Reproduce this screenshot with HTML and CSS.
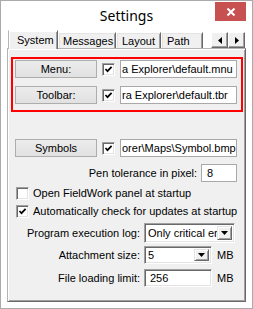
FILE: index.html
```html
<!DOCTYPE html>
<html lang="en">
<head>
    <meta charset="UTF-8">
    <title>Settings</title>
    <link rel="stylesheet" href="styles.css">
</head>
<body>
    <div class="window">
        <div class="titlebar">
            <span></span>
            <span class="title">Settings</span>
            <span class="close">
                <svg width="10" height="10" viewBox="0 0 10 10"><path d="M1.5 1.5 L8.5 8.5 M8.5 1.5 L1.5 8.5" stroke="#fff" stroke-width="2"/></svg>
            </span>
        </div>

        <div class="tabstrip">
            <div class="tab active">System</div>
            <div class="tab">Messages</div>
            <div class="tab">Layout</div>
            <div class="tab">Path</div>
            <div class="tab-scroll">
                <span class="scroll-btn"><svg width="4" height="7" viewBox="0 0 4 7"><path d="M4 0 L0 3.5 L4 7 Z" fill="#000"/></svg></span>
                <span class="scroll-btn"><svg width="4" height="7" viewBox="0 0 4 7"><path d="M0 0 L4 3.5 L0 7 Z" fill="#000"/></svg></span>
            </div>
        </div>

        <div class="panel">
            <div class="highlight">
                <div class="file-row">
                    <span class="btn">Menu:</span>
                    <span class="check checked"></span>
                    <span class="field path">a Explorer\default.mnu</span>
                </div>
                <div class="file-row">
                    <span class="btn">Toolbar:</span>
                    <span class="check checked"></span>
                    <span class="field path">ra Explorer\default.tbr</span>
                </div>
            </div>

            <div class="file-row symbols">
                <span class="btn">Symbols</span>
                <span class="check checked"></span>
                <span class="field path">orer\Maps\Symbol.bmp</span>
            </div>

            <div class="pen-row">
                <span>Pen tolerance in pixel:</span>
                <span class="field small">8</span>
            </div>

            <div class="check-row first">
                <span class="check"></span>
                <span>Open FieldWork panel at startup</span>
            </div>
            <div class="check-row">
                <span class="check checked"></span>
                <span>Automatically check for updates at startup</span>
            </div>

            <div class="field-row log">
                <span class="label">Program execution log:</span>
                <span class="combo wide"><span class="combo-text">Only critical err</span><span class="drop"></span></span>
            </div>
            <div class="field-row attach">
                <span class="label">Attachment size:</span>
                <span class="combo"><span class="combo-text">5</span><span class="drop"></span></span>
                <span class="unit">MB</span>
            </div>
            <div class="field-row limit">
                <span class="label">File loading limit:</span>
                <span class="sunken">256</span>
                <span class="unit">MB</span>
            </div>
        </div>
    </div>
</body>
</html>
```

FILE: styles.css
```css
body {
    margin: 0;
    padding: 0;
    background: #fff;
    font-family: "Liberation Sans", Arial, sans-serif;
    font-size: 11px;
    color: #000;
}
.window {
    width: 253px;
    height: 309px;
    box-sizing: border-box;
    border: 1px solid #aaa;
    background: #fff;
}

/* title bar */
.titlebar {
    height: 29px;
    display: grid;
    grid-template-columns: 1fr auto 1fr;
}
.title {
    font-family: "Noto Sans", sans-serif;
    font-size: 14px;
    line-height: 29px;
    color: #000;
}
.close {
    justify-self: end;
    width: 31px;
    height: 19px;
    margin: 1px 6px 0 0;
    background: #c75050;
    display: flex;
    align-items: center;
    justify-content: center;
}

/* tabs */
.tabstrip {
    height: 18px;
    display: flex;
    align-items: flex-end;
    padding-left: 7px;
}
.tab {
    height: 16px;
    box-sizing: border-box;
    background: #f0f0f0;
    border-top: 1px solid #fff;
    border-left: 1px solid #fff;
    border-right: 1px solid #696969;
    box-shadow: inset 1px 1px #e3e3e3, inset -1px 0 #a0a0a0;
    padding: 1px 5px 0 5px;
    line-height: 14px;
}
.tab.active {
    height: 19px;
    width: 50px;
    margin-bottom: -1px;
    position: relative;
    z-index: 1;
    padding: 2px 6px 0 8px;
    border-left: 1px solid #b4b4b4;
    box-shadow: inset 1px 1px #fff, inset -1px 0 #a0a0a0;
}
.tab:nth-child(2) { width: 58px; padding-left: 4px; }
.tab:nth-child(3) { width: 45px; padding-left: 5px; }
.tab:nth-child(4) { width: 42px; padding-left: 5px; }
.tab-scroll {
    display: flex;
    margin-left: 8px;
    align-self: flex-end;
}
.scroll-btn {
    width: 17px;
    height: 16px;
    box-sizing: border-box;
    background: #f0f0f0;
    border-top: 1px solid #fff;
    border-left: 1px solid #fff;
    border-right: 1px solid #696969;
    border-bottom: 1px solid #696969;
    box-shadow: inset -1px -1px #a0a0a0;
    display: flex;
    align-items: center;
    justify-content: center;
}

/* page */
.panel {
    margin-left: 6px;
    width: 239px;
    height: 254px;
    box-sizing: border-box;
    background: #f0f0f0;
    border-top: 1px solid #b4b4b4;
    border-left: 1px solid #b4b4b4;
    border-right: 1px solid #696969;
    border-bottom: 1px solid #696969;
    box-shadow: inset 1px 1px #fff, inset -1px -1px #a0a0a0;
    display: flex;
    flex-direction: column;
}
.highlight {
    margin: 8px 0 0 3px;
    width: 232px;
    height: 55px;
    box-sizing: border-box;
    border: 2px solid #f00;
    padding: 1px 0 0 2px;
    display: flex;
    flex-direction: column;
    gap: 8px;
}
.file-row {
    display: flex;
    align-items: center;
    height: 18px;
    gap: 5px;
}
.file-row.symbols {
    margin: 27px 0 0 7px;
}
.btn {
    width: 82px;
    height: 18px;
    box-sizing: border-box;
    border: 1px solid #adadad;
    background: linear-gradient(#ececec, #e1e1e1);
    display: flex;
    align-items: center;
    justify-content: center;
}

.check {
    width: 13px;
    height: 13px;
    flex: none;
    box-sizing: border-box;
    background: #fff;
    border-top: 1px solid #a0a0a0;
    border-left: 1px solid #a0a0a0;
    border-right: 1px solid #fff;
    border-bottom: 1px solid #fff;
    box-shadow: inset 1px 1px #696969, inset -1px -1px #e3e3e3;
}
.check.checked {
    background: #fff url("data:image/svg+xml;utf8,<svg xmlns='http://www.w3.org/2000/svg' width='11' height='11' viewBox='0 0 11 11'><path d='M2.5 5 L4.5 7.2 L8.6 2.8' fill='none' stroke='black' stroke-width='1.7'/></svg>") center / 11px 11px no-repeat;
}

.field {
    height: 18px;
    box-sizing: border-box;
    background: #fff;
    border: 1px solid #a9a9a9;
    padding: 0 2px;
    display: flex;
    align-items: center;
    white-space: nowrap;
    overflow: hidden;
}
.field.path {
    width: 117px;
    padding-left: 1px;
}
.field.small {
    width: 36px;
    padding-left: 5px;
}
.pen-row {
    margin: 7px 8px 0 0;
    display: flex;
    justify-content: flex-end;
    align-items: center;
    gap: 4px;
}

.check-row {
    margin: 4px 0 0 8px;
    height: 14px;
    display: flex;
    align-items: center;
    gap: 4px;
}

.field-row {
    display: flex;
    align-items: center;
    gap: 4px;
}
.field-row.log { margin-top: 5px; }
.field-row.attach { margin-top: 3px; }
.field-row.limit { margin-top: 5px; }
.label {
    width: 132px;
    text-align: right;
}
.combo, .sunken {
    height: 18px;
    width: 68px;
    box-sizing: border-box;
    background: #fff;
    border-top: 1px solid #a0a0a0;
    border-left: 1px solid #a0a0a0;
    border-right: 1px solid #fff;
    border-bottom: 1px solid #fff;
    box-shadow: inset 1px 1px #696969, inset -1px -1px #e3e3e3;
    display: flex;
    align-items: center;
}
.combo.wide {
    width: 91px;
    height: 20px;
}
.combo-text {
    flex: 1;
    padding-left: 3px;
    white-space: nowrap;
    overflow: hidden;
}
.sunken {
    padding-left: 5px;
}
.drop {
    width: 15px;
    flex: none;
    align-self: stretch;
    margin: 2px 2px 2px 0;
    box-sizing: border-box;
    background: #f0f0f0 url("data:image/svg+xml;utf8,<svg xmlns='http://www.w3.org/2000/svg' width='7' height='4' viewBox='0 0 7 4'><path d='M0 0 L7 0 L3.5 4 Z' fill='black'/></svg>") center / 7px 4px no-repeat;
    border-top: 1px solid #e3e3e3;
    border-left: 1px solid #e3e3e3;
    border-right: 1px solid #696969;
    border-bottom: 1px solid #696969;
    box-shadow: inset 1px 1px #fff, inset -1px -1px #a0a0a0;
}
.unit {
    margin-left: 1px;
}
```
